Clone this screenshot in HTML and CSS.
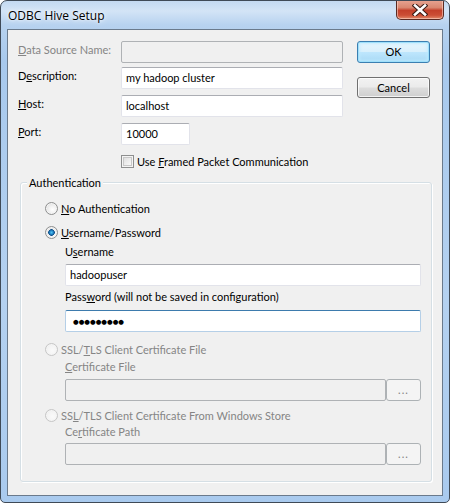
FILE: index.html
```html
<!DOCTYPE html>
<html>
<head>
<meta charset="utf-8">
<link rel="stylesheet" href="styles.css">
</head>
<body>
<div class="window">
  <div class="titlebar">
    <span class="title">ODBC Hive Setup</span>
    <div class="close">
      <svg width="16" height="12" viewBox="0 0 16 12">
        <path d="M3 1.5 L13 10.5 M13 1.5 L3 10.5" stroke="#3a1a14" stroke-width="4.6" stroke-linecap="square" fill="none"/>
        <path d="M3 1.5 L13 10.5 M13 1.5 L3 10.5" stroke="#ffffff" stroke-width="2.6" stroke-linecap="square" fill="none"/>
      </svg>
    </div>
  </div>
  <div class="client">
    <div class="top">
      <div class="fields">
        <div class="row">
          <span class="lbl gray"><u>D</u>ata Source Name:</span>
          <div class="input long disabled"></div>
        </div>
        <div class="row gap4">
          <span class="lbl">D<u>e</u>scription:</span>
          <div class="input long">my hadoop cluster</div>
        </div>
        <div class="row gap6">
          <span class="lbl"><u>H</u>ost:</span>
          <div class="input long">localhost</div>
        </div>
        <div class="row gap6">
          <span class="lbl"><u>P</u>ort:</span>
          <div class="input port">10000</div>
        </div>
        <div class="check-row">
          <span class="checkbox"></span>
          <span class="txt">Use <u>F</u>ramed Packet Communication</span>
        </div>
      </div>
      <div class="buttons">
        <div class="btn default">OK</div>
        <div class="btn">Cancel</div>
      </div>
    </div>
    <div class="group">
      <span class="legend">Authentication</span>
      <div class="radio-row first">
        <span class="radio"></span>
        <span class="txt"><u>N</u>o Authentication</span>
      </div>
      <div class="radio-row r2">
        <span class="radio checked"></span>
        <span class="txt"><u>U</u>sername/Password</span>
      </div>
      <div class="sub">
        <div class="sublbl l-user">U<u>s</u>ername</div>
        <div class="input wide i-user">hadoopuser</div>
        <div class="sublbl l-pass">Pass<u>w</u>ord (will not be saved in configuration)</div>
        <div class="input wide focused i-pass"><span class="dots">●●●●●●●●●</span></div>
      </div>
      <div class="radio-row r3 gray">
        <span class="radio disabled"></span>
        <span class="txt">SSL/<u>T</u>LS Client Certificate File</span>
      </div>
      <div class="sub">
        <div class="sublbl gray l-cf"><u>C</u>ertificate File</div>
        <div class="browse-row b1">
          <div class="input cert disabled"></div>
          <div class="dotbtn">...</div>
        </div>
      </div>
      <div class="radio-row r4 gray">
        <span class="radio disabled"></span>
        <span class="txt">SS<u>L</u>/TLS Client Certificate From Windows Store</span>
      </div>
      <div class="sub">
        <div class="sublbl gray l-cp">Ce<u>r</u>tificate Path</div>
        <div class="browse-row b2">
          <div class="input cert disabled"></div>
          <div class="dotbtn">...</div>
        </div>
      </div>
    </div>
  </div>
</div>
</body>
</html>
```
FILE: styles.css
```css
html, body {
  margin: 0;
  padding: 0;
  background: #ffffff;
}
body {
  font-family: Lato, "Open Sans", sans-serif;
  font-size: 11px;
  color: #000;
}
u {
  text-decoration: underline;
  text-underline-offset: 1px;
}
.window {
  position: relative;
  width: 450px;
  height: 503px;
  box-sizing: border-box;
  border: 1px solid #3f4a57;
  border-radius: 7px 7px 5px 5px;
  background: linear-gradient(180deg, #c3d9f1 0px, #d3e4f6 10px, #b7d2ef 24px, #a8c9ed 60px, #b4d1f0 300px, #a9caee 503px);
  display: flex;
  flex-direction: column;
  overflow: hidden;
}
.titlebar {
  height: 28px;
  flex: none;
  display: flex;
  align-items: center;
  padding-left: 7px;
}
.title {
  font-family: "Open Sans", sans-serif;
  font-size: 12px;
  color: #000;
  margin-top: 1px;
  text-shadow: 0 0 6px rgba(255,255,255,0.9), 0 0 3px rgba(255,255,255,0.9);
}
.close {
  position: absolute;
  top: -1px;
  right: 5px;
  width: 48px;
  height: 20px;
  box-sizing: border-box;
  border: 1px solid #5a2a22;
  border-top: none;
  border-radius: 0 0 5px 5px;
  background: linear-gradient(180deg, #e8a593 0%, #d98770 40%, #c4402a 55%, #cc4e35 80%, #e28a6a 100%);
  box-shadow: inset 0 0 0 1px rgba(255,220,210,0.55);
  display: flex;
  align-items: center;
  justify-content: center;
}
.client {
  flex: 1;
  margin: 0 6px 6px 6px;
  border: 1px solid #6a7a8c;
  background: #f0f0f0;
  display: flex;
  flex-direction: column;
}
.top {
  display: flex;
  padding: 11px 0 0 10px;
}
.fields {
  width: 325px;
}
.row {
  display: flex;
  align-items: flex-start;
  height: 22px;
}
.gap4 { margin-top: 4px; }
.gap6 { margin-top: 6px; }
.lbl {
  width: 103px;
  flex: none;
  padding-top: 1px;
  line-height: 15px;
}
.gray { color: #858585; }
.input {
  box-sizing: border-box;
  height: 22px;
  background: #fff;
  border: 1px solid #e2e3ea;
  border-top-color: #abadb3;
  border-radius: 2px;
  padding: 0 4px;
  line-height: 20px;
  white-space: nowrap;
  overflow: hidden;
}
.input.long { width: 222px; }
.input.port { width: 69px; }
.input.disabled {
  background: #f0f0f0;
  border: 1px solid #afb2b5;
  border-radius: 2px;
}
.input.focused {
  border-color: #b5cfe7;
  border-top-color: #3d7bad;
}
.check-row {
  display: flex;
  align-items: center;
  height: 14px;
  margin-top: 9px;
  padding-left: 103px;
}
.checkbox {
  width: 13px;
  height: 13px;
  box-sizing: border-box;
  border: 1px solid #8e8f8f;
  background: linear-gradient(135deg, #d9d9d9 0%, #f0f0f0 60%, #ffffff 100%);
  box-shadow: inset 0 0 0 1px #f4f4f4, inset 0 0 0 2px #c8c8c8;
  margin-right: 3px;
  flex: none;
}
.txt { line-height: 15px; white-space: nowrap; }
.buttons {
  margin-left: 14px;
  display: flex;
  flex-direction: column;
}
.btn {
  width: 73px;
  height: 22px;
  box-sizing: border-box;
  border: 1px solid #707070;
  border-radius: 3px;
  background: linear-gradient(180deg, #f2f2f2 0%, #ebebeb 48%, #dddddd 52%, #cfcfcf 100%);
  box-shadow: inset 0 0 0 1px rgba(255,255,255,0.75);
  text-align: center;
  line-height: 20px;
}
.btn + .btn { margin-top: 14px; height: 21px; line-height: 19px; }
.btn.default {
  border-color: #3c7fb1;
  background: linear-gradient(180deg, #eaf6fd 0%, #d9f0fc 48%, #bee6fd 52%, #a7d9f5 100%);
  box-shadow: inset 0 0 0 1px #9fe0fb, inset 0 0 3px 2px rgba(190,235,255,0.8);
}
.group {
  position: relative;
  margin: 14px 0 0 12px;
  width: 412px;
  height: 300px;
  box-sizing: border-box;
  border: 1px solid #d5dfe5;
  border-radius: 3px;
  box-shadow: inset 1px 1px 0 #ffffff, 1px 1px 0 #ffffff;
  padding: 17px 10px 0 24px;
}
.legend {
  position: absolute;
  top: -8px;
  left: 6px;
  padding: 0 2px;
  background: #f0f0f0;
  line-height: 15px;
}
.radio-row {
  display: flex;
  align-items: center;
  height: 16px;
}
.radio-row.r2 { margin-top: 8px; }
.radio-row.r3 { margin-top: 9px; }
.radio-row.r4 { margin-top: 6px; }
.radio {
  width: 13px;
  height: 13px;
  box-sizing: border-box;
  border-radius: 50%;
  border: 1px solid #8e8f8f;
  background: radial-gradient(circle at 60% 60%, #ffffff 0%, #f1f1f1 40%, #d4d4d4 100%);
  box-shadow: inset 0 0 0 1px #f4f4f4;
  margin-right: 3px;
  flex: none;
}
.radio.checked {
  background:
    radial-gradient(circle at 50% 50%, #54c2f0 0px, #2a93d3 1.5px, #0e4f8a 3px, transparent 3.6px),
    radial-gradient(circle at 60% 60%, #ffffff 0%, #f1f1f1 40%, #d4d4d4 100%);
}
.radio.disabled {
  border-color: #c6c6c6;
  background: radial-gradient(circle at 60% 60%, #fafafa 0%, #f4f4f4 50%, #e6e6e6 100%);
}
.sub {
  padding-left: 20px;
}
.sublbl {
  height: 14px;
  line-height: 14px;
  white-space: nowrap;
}
.l-user { margin-top: 5px; }
.i-user { margin-top: 5px; }
.l-pass { margin-top: 4px; }
.i-pass { margin-top: 6px; padding-left: 7px; }
.l-cf { margin-top: 3px; }
.l-cp { margin-top: 2px; }
.b1 { margin-top: 5px; }
.b2 { margin-top: 4px; }
.input.wide { width: 356px; }
.dots {
  font-family: "DejaVu Sans", sans-serif;
  font-size: 6.5px;
  letter-spacing: 0;
  position: relative;
  top: -1px;
}
.browse-row {
  display: flex;
  height: 22px;
}
.input.cert { width: 321px; }
.dotbtn {
  width: 35px;
  height: 22px;
  margin-left: 0;
  box-sizing: border-box;
  border: 1px solid #adb2b5;
  border-radius: 3px;
  background: #f4f4f4;
  color: #838383;
  text-align: center;
  line-height: 20px;
  letter-spacing: 1px;
}
```
